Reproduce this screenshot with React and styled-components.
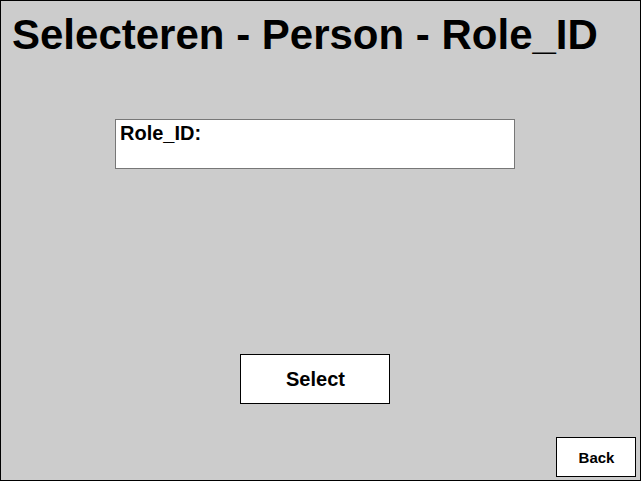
import React from "react";
import styled, { createGlobalStyle } from "styled-components";

const Global = createGlobalStyle`
  html, body { margin: 0; padding: 0; background: #ffffff; }
  body { font-family: "Liberation Sans", Arial, sans-serif; }
`;

const Frame = styled.div`
  box-sizing: border-box;
  width: 641px;
  height: 481px;
  border: 1px solid #000;
  background: #cccccc;
  display: flex;
  flex-direction: column;
`;

const Title = styled.h1`
  margin: 12px 0 0 11px;
  font-size: 42px;
  line-height: 44px;
  font-weight: bold;
  color: #000;
  white-space: nowrap;
`;

const Content = styled.div`
  width: 400px;
  margin: 62px 0 0 114px;
  display: flex;
  flex-direction: column;
  align-items: center;
`;

const Field = styled.div`
  box-sizing: border-box;
  align-self: stretch;
  height: 50px;
  border: 1px solid #777;
  background: #fff;
  padding: 2px 4px;
`;

const Label = styled.span`
  font-size: 20px;
  font-weight: bold;
  color: #000;
`;

const Button = styled.button`
  box-sizing: border-box;
  width: ${(p) => p.$w}px;
  height: ${(p) => p.$h}px;
  border: 1px solid #000;
  background: #fff;
  font-family: "Liberation Sans", Arial, sans-serif;
  font-weight: bold;
  font-size: ${(p) => p.$fs}px;
  color: #000;
  padding: 0 0 0 1px;
  cursor: pointer;
`;

const SelectButton = styled(Button)`
  margin-top: 185px;
`;

const Footer = styled.div`
  margin-top: auto;
  display: flex;
  justify-content: flex-end;
  padding: 0 4px 3px 0;
`;

export default function App() {
  return (
    <>
      <Global />
      <Frame>
        <Title>Selecteren - Person - Role_ID</Title>
        <Content>
          <Field>
            <Label>Role_ID:</Label>
          </Field>
          <SelectButton $w={150} $h={50} $fs={20}>Select</SelectButton>
        </Content>
        <Footer>
          <Button $w={80} $h={40} $fs={15}>Back</Button>
        </Footer>
      </Frame>
    </>
  );
}
